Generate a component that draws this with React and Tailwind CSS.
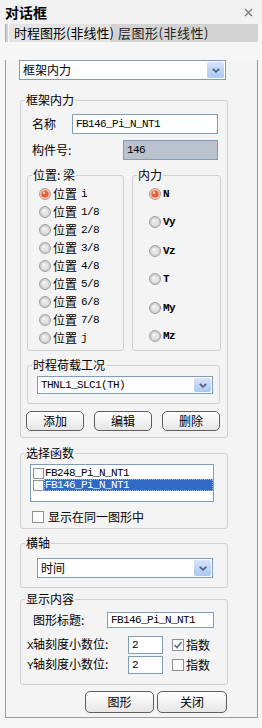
import React from "react";

const MONO = "font-['Liberation_Mono',monospace] text-[11px] tracking-[-0.6px]";

function Mono({ children, className = "" }) {
  return <span className={`${MONO} ${className}`}>{children}</span>;
}

function Radio({ checked }) {
  return (
    <svg width="12" height="12" viewBox="0 0 12 12" className="shrink-0">
      <circle cx="6" cy="6" r="5.5" fill={checked ? "#f2c4b4" : "#cfcfcf"} stroke={checked ? "#b59e96" : "#a2a2a2"} />
      <circle cx="6" cy="6" r="3.6" fill={checked ? "#e5603a" : "#e6e6e6"} />
      <circle cx="5" cy="4.8" r="1.3" fill={checked ? "#fbc8b0" : "#f6f6f6"} />
    </svg>
  );
}

function Check({ checked, size = 12 }) {
  return (
    <svg width={size} height={size} viewBox={`0 0 ${size} ${size}`} className="shrink-0">
      <rect x="0.5" y="0.5" width={size - 1} height={size - 1} fill="#fbfbfb" stroke="#8f9090" />
      {checked && (
        <path d="M2.5 6 L5 8.5 L9.5 3" fill="none" stroke="#5b6d80" strokeWidth="1.6" />
      )}
    </svg>
  );
}

function Select({ children, className = "" }) {
  return (
    <div className={`flex bg-white border border-[#7f9db9] ${className}`}>
      <div className="flex-1 flex items-center pl-[3px] text-[12px] leading-[12px] overflow-hidden whitespace-nowrap">
        {children}
      </div>
      <div className="w-[17px] m-[1px] flex items-center justify-center rounded-[2px] bg-gradient-to-b from-[#d6e4f9] to-[#abc7f0]">
        <svg width="8" height="5" viewBox="0 0 8 5">
          <path d="M0.8 0.8 L4 3.8 L7.2 0.8" fill="none" stroke="#4d6185" strokeWidth="1.8" />
        </svg>
      </div>
    </div>
  );
}

function Input({ children, className = "" }) {
  return (
    <div className={`flex items-center border border-[#7f9db9] pl-[3px] whitespace-nowrap overflow-hidden ${className}`}>
      {children}
    </div>
  );
}

function Button({ children, className = "" }) {
  return (
    <div
      className={`flex items-center justify-center rounded-[5px] border border-[#5e5e5e] bg-gradient-to-b from-[#ffffff] to-[#e6e6e6] text-[12px] leading-[12px] ${className}`}
    >
      {children}
    </div>
  );
}

function Group({ label, className = "", children }) {
  return (
    <div className={`border border-[#cfcfcf] rounded-[3px] ${className}`}>
      <div className="-mt-[8px] ml-[4px] w-fit px-[1px] bg-[#f4f4f4] text-[12px] leading-[14px]">{label}</div>
      {children}
    </div>
  );
}

export default function App() {
  const positions = ["i", "1/8", "2/8", "3/8", "4/8", "5/8", "6/8", "7/8", "j"];
  const forces = [
    ["N", "mt-[6px]"],
    ["Vy", "mt-[16px]"],
    ["Vz", "mt-[17px]"],
    ["T", "mt-[16px]"],
    ["My", "mt-[17px]"],
    ["Mz", "mt-[16px]"],
  ];
  return (
    <div className="w-[262px] h-[728px] bg-[#f6f6f6] text-black font-['Noto_Sans_CJK_SC',sans-serif] overflow-hidden">
      {/* title bar */}
      <div className="h-[24px] flex items-center bg-[#f2f2f2]">
        <div className="pl-[5px] text-[14px] font-bold leading-[16px]">对话框</div>
        <div className="ml-auto mr-[9px]">
          <svg width="9" height="9" viewBox="0 0 9 9">
            <path d="M1 1 L8 8 M8 1 L1 8" stroke="#7a7a7a" strokeWidth="1.3" />
          </svg>
        </div>
      </div>
      {/* tabs */}
      <div className="ml-[5px] w-[253px] h-[18px] bg-[#d3d3d3] flex border-l border-[#a8a8a8]">
        <div className="ml-[2px] w-[103px] bg-[#e4e4e4] border-l border-[#f8f8f8] text-[13px] leading-[18px] pl-[5px] whitespace-nowrap">
          时程图形(非线性)
        </div>
        <div className="ml-[7px] text-[13px] leading-[18px] whitespace-nowrap text-[#222] tracking-[0.5px]">层图形(非线性)</div>
      </div>
      {/* panel */}
      <div className="ml-[5px] w-[253px] border-l border-r border-b border-[#9c9c9c] bg-[#f4f4f4] pl-[14px] pb-[4px]">
        <Select className="mt-[18px] -ml-[1px] w-[207px] h-[20px]">框架内力</Select>

        {/* 框架内力 */}
        <Group label="框架内力" className="mt-[20px] w-[208px] pb-[6px]">
          <div className="mt-[7px] h-[20px] flex items-center pl-[11px]">
            <div className="w-[40px] text-[12px]">名称</div>
            <Input className="w-[146px] h-full bg-white">
              <Mono>FB146_Pi_N_NT1</Mono>
            </Input>
          </div>
          <div className="mt-[6px] h-[20px] flex items-center pl-[11px]">
            <div className="w-[91px] text-[12px]">构件号:</div>
            <Input className="w-[95px] h-full bg-[#b9c2cd]">
              <Mono>146</Mono>
            </Input>
          </div>
          <div className="mt-[15px] flex pl-[6px] gap-[8px]">
            <Group label="位置: 梁" className="w-[97px] h-[176px]">
              <div className="mt-[3px]">
                {positions.map((p, i) => (
                  <div key={p} className="h-[18px] flex items-center pl-[11px]">
                    <Radio checked={i === 0} />
                    <span className="ml-[2px] text-[12px] leading-[12px]">位置</span>
                    <Mono className="ml-[4px]">{p}</Mono>
                  </div>
                ))}
              </div>
            </Group>
            <Group label="内力" className="w-[89px] h-[176px]">
              {forces.map(([f, m], i) => (
                <div key={f} className={`${m} h-[12px] flex items-center pl-[16px]`}>
                  <Radio checked={i === 0} />
                  <Mono className="ml-[2px] font-bold">{f}</Mono>
                </div>
              ))}
            </Group>
          </div>
          <Group label="时程荷载工况" className="mt-[14px] ml-[6px] w-[193px] pb-[9px]">
            <Select className="mt-[4px] ml-[9px] w-[176px] h-[18px]">
              <Mono>THNL1_SLC1(TH)</Mono>
            </Select>
          </Group>
          <div className="mt-[7px] flex pl-[5px] gap-[10px]">
            <Button className="w-[58px] h-[20px]">添加</Button>
            <Button className="w-[58px] h-[20px]">编辑</Button>
            <Button className="w-[58px] h-[20px]">删除</Button>
          </div>
        </Group>

        {/* 选择函数 */}
        <Group label="选择函数" className="mt-[15px] w-[208px] pb-[5px]">
          <div className="mt-[4px] ml-[9px] w-[184px] h-[38px] border border-[#7f9db9] bg-white pt-[2px]">
            <div className="h-[12px] flex items-center pl-[2px]">
              <Check size={11} />
              <Mono className="ml-[1px] leading-[12px]">FB248_Pi_N_NT1</Mono>
            </div>
            <div className="h-[12px] flex items-center pl-[2px]">
              <Check size={11} />
              <div className="flex-1 h-full bg-[#316ac5] text-white flex items-center outline outline-1 outline-dotted outline-[#9fb8e6] -outline-offset-1">
                <Mono className="ml-[1px] leading-[12px]">FB146_Pi_N_NT1</Mono>
              </div>
            </div>
          </div>
          <div className="mt-[9px] h-[12px] flex items-center pl-[11px]">
            <Check />
            <span className="ml-[4px] text-[12px] leading-[12px]">显示在同一图形中</span>
          </div>
        </Group>

        {/* 横轴 */}
        <Group label="横轴" className="mt-[14px] w-[208px] pb-[9px]">
          <Select className="mt-[8px] ml-[16px] w-[176px] h-[20px]">时间</Select>
        </Group>

        {/* 显示内容 */}
        <Group label="显示内容" className="mt-[11px] w-[208px] pb-[10px]">
          <div className="mt-[6px] h-[16px] flex items-center pl-[12px]">
            <div className="w-[74px] text-[12px]">图形标题:</div>
            <Input className="w-[107px] h-full bg-white">
              <Mono>FB146_Pi_N_NT1</Mono>
            </Input>
          </div>
          <div className="mt-[8px] h-[18px] flex items-center pl-[6px]">
            <div className="w-[101px] text-[12px] whitespace-nowrap">
              <Mono>X</Mono>轴刻度小数位:
            </div>
            <Input className="w-[35px] h-full bg-white">
              <Mono>2</Mono>
            </Input>
            <div className="ml-[9px]">
              <Check checked />
            </div>
            <span className="ml-[2px] text-[12px]">指数</span>
          </div>
          <div className="mt-[2px] h-[18px] flex items-center pl-[6px]">
            <div className="w-[101px] text-[12px] whitespace-nowrap">
              <Mono>Y</Mono>轴刻度小数位:
            </div>
            <Input className="w-[35px] h-full bg-white">
              <Mono>2</Mono>
            </Input>
            <div className="ml-[9px]">
              <Check />
            </div>
            <span className="ml-[2px] text-[12px]">指数</span>
          </div>
        </Group>

        <div className="mt-[6px] flex ml-[65px] gap-[3px]">
          <Button className="w-[69px] h-[22px]">图形</Button>
          <Button className="w-[70px] h-[22px]">关闭</Button>
        </div>
      </div>
    </div>
  );
}
